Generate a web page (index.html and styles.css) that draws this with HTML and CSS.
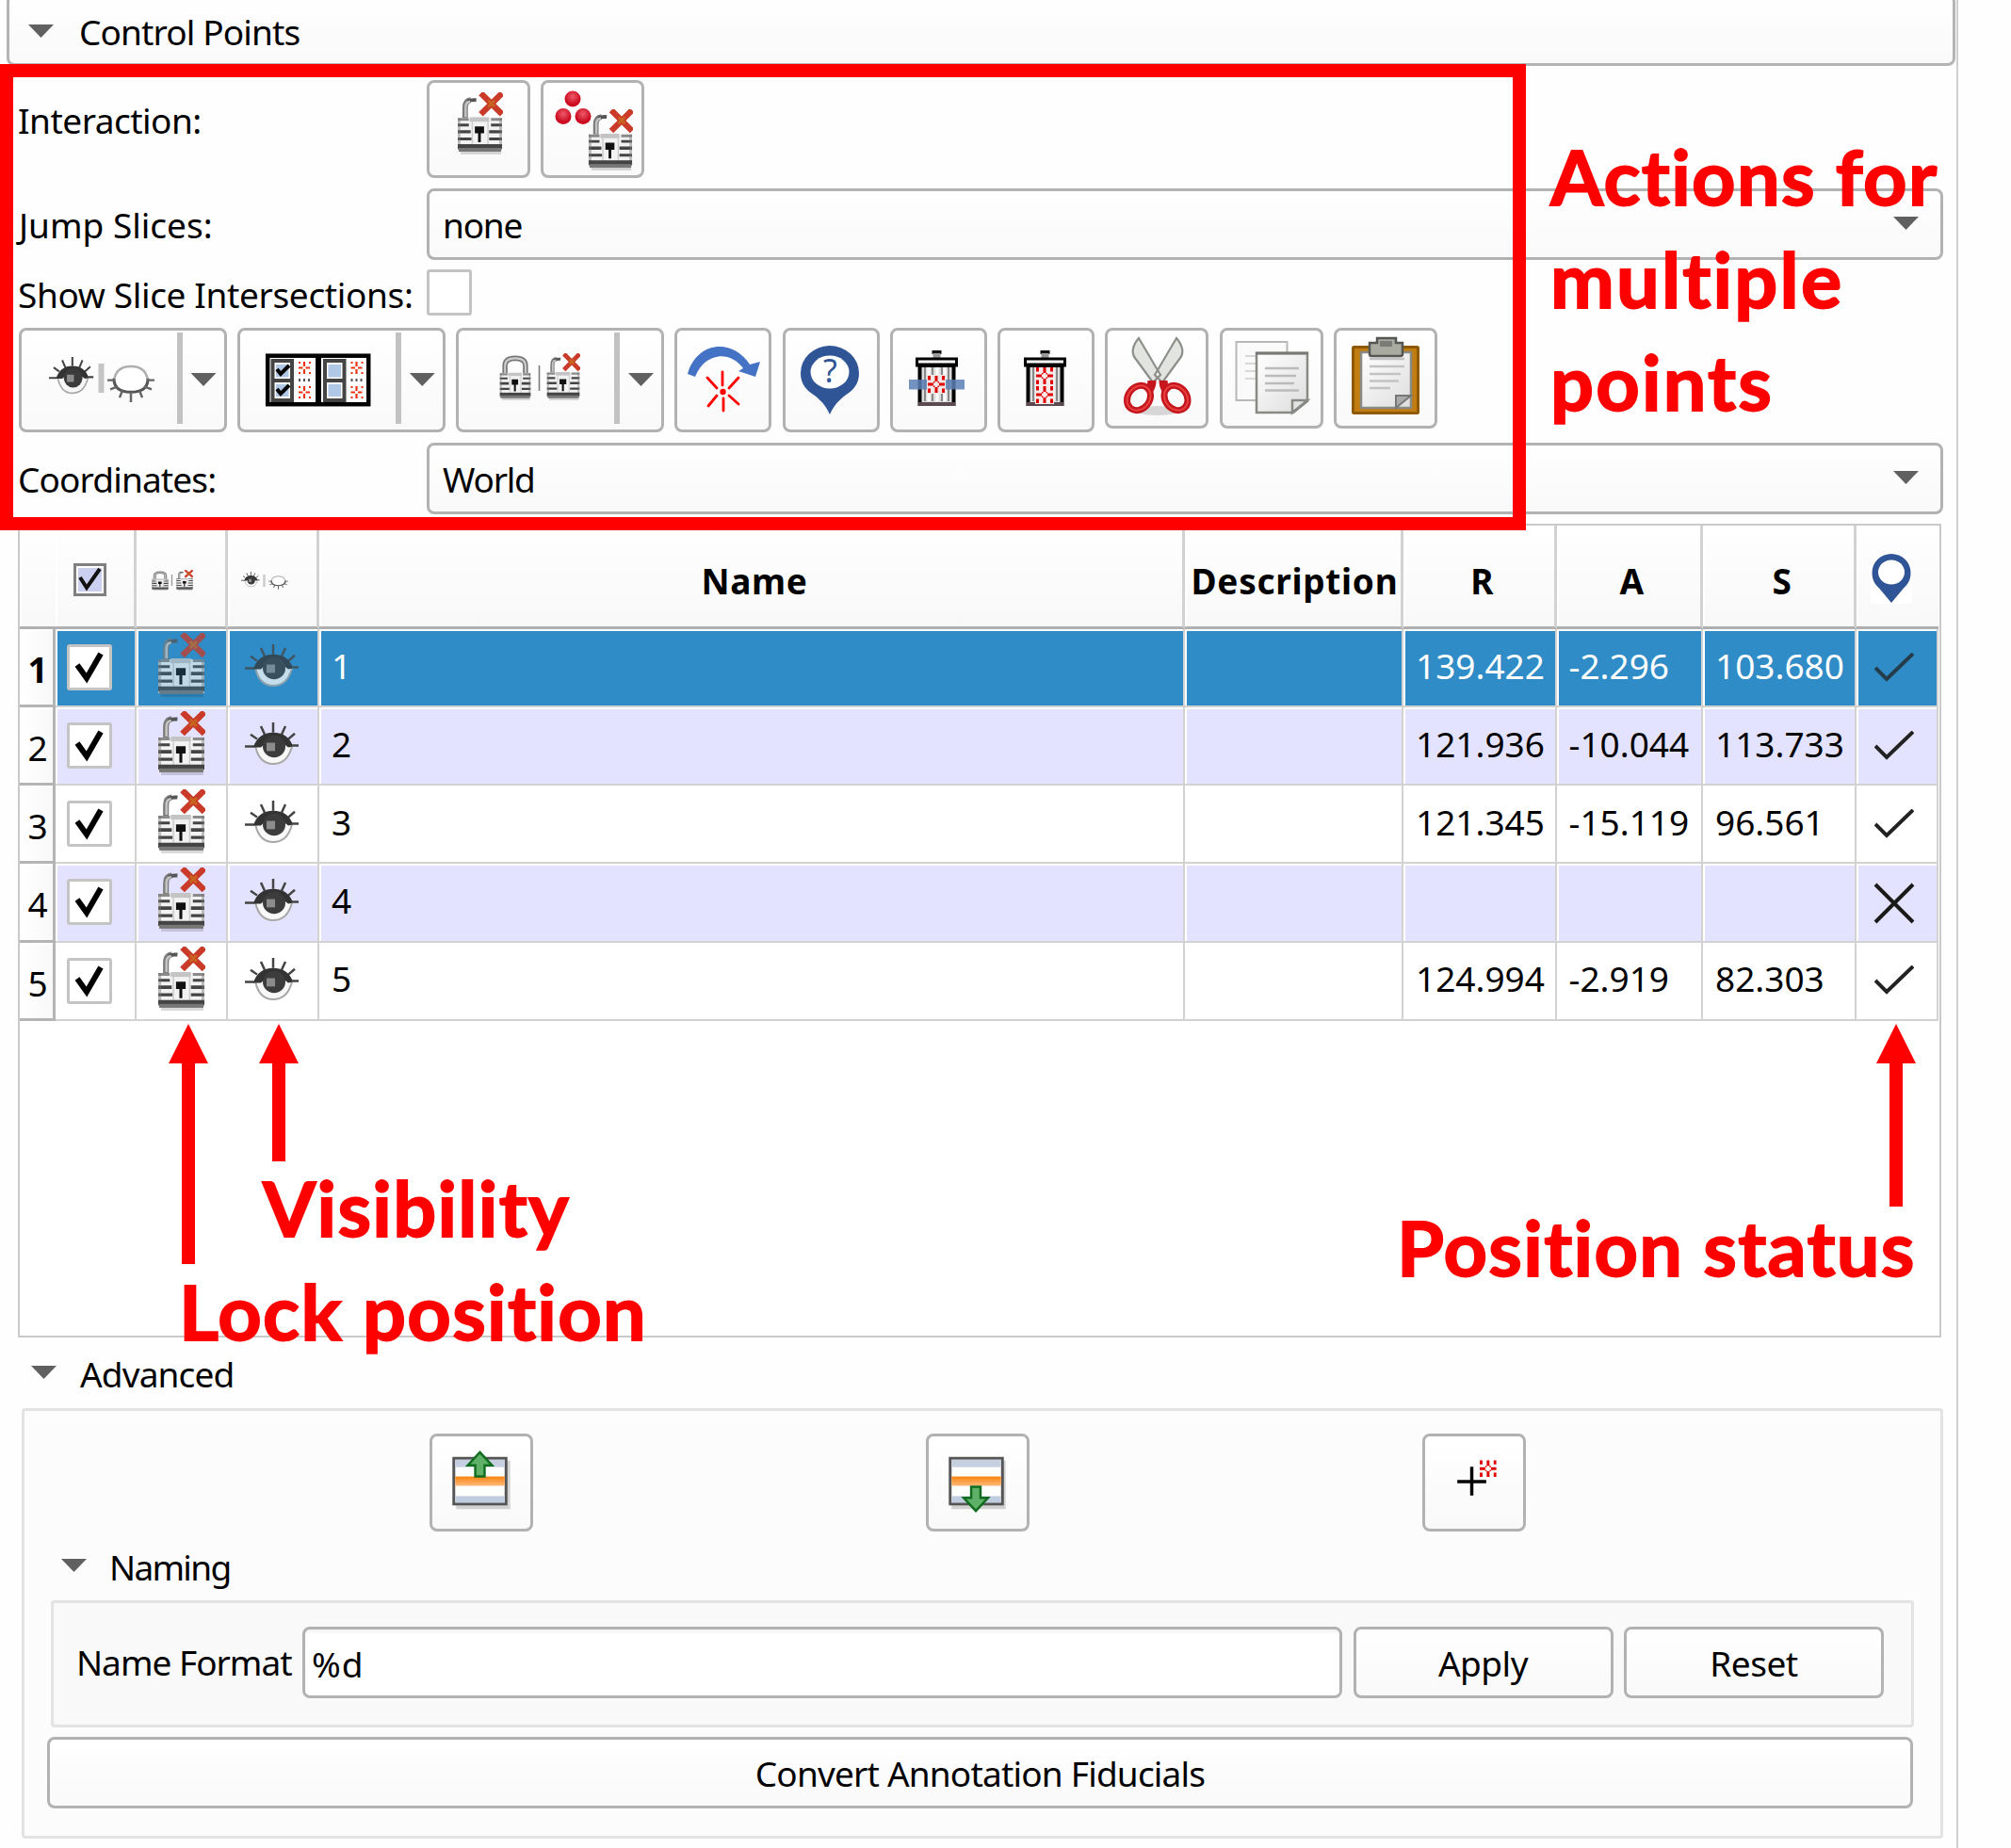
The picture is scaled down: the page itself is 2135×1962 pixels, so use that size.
FILE: index.html
```html
<!DOCTYPE html>
<html lang="en">
<head>
<meta charset="utf-8">
<title>Control Points</title>
<link rel="stylesheet" href="styles.css">
</head>
<body>
<svg class="defs" aria-hidden="true">
  <defs>
    <radialGradient id="gBall" cx=".5" cy=".35"><stop offset="0" stop-color="#ee5b6a"/><stop offset="1" stop-color="#cc0a20"/></radialGradient>
    <linearGradient id="gOr" x1="0" x2="0" y1="0" y2="1"><stop offset="0" stop-color="#f98208"/><stop offset=".4" stop-color="#fa9a3c"/><stop offset="1" stop-color="#fdb878"/></linearGradient>
    <linearGradient id="gPage" x1="0" x2="1" y1="0" y2="1"><stop offset="0" stop-color="#fff"/><stop offset="1" stop-color="#ddd"/></linearGradient>
  </defs>
  <symbol id="lockbody" viewBox="0 0 50 40" preserveAspectRatio="none">
    <rect x="4" y="36" width="44" height="4" fill="#000" opacity=".15"/>
    <rect x="1" y="1" width="48" height="35" fill="#f2f2f2"/>
    <path d="M1 1h12v3H1zM37 1h12v3H37z" fill="#8a8a8a"/>
    <path d="M1 7h12v3H1zM37 7h12v3H37zM1 14h14v3.500H1zM35 14h14v3.500H35zM1 22h15v3H1zM35 22h14v3H35z" fill="#444"/>
    <path d="M1 1h3v34H1zM46 1h3v34h-3z" fill="#777" opacity=".45"/>
    <rect x="14" y="0" width="21" height="5" fill="#c4c4c4"/>
    <rect x="16" y="5" width="1.500" height="24" fill="#ccc"/><rect x="33" y="5" width="1.500" height="24" fill="#ccc"/>
    <path d="M19.500 10h10v7.500h-3.500v9.500h-3v-9.500h-3.500z" fill="#111"/>
    <rect x="1" y="29" width="48" height="5" fill="#444"/><rect x="2" y="33" width="46" height="4" fill="#777"/>
  </symbol>
  <symbol id="unlock" viewBox="0 0 50 68" preserveAspectRatio="none">
    <path d="M9 28V17q0-8 6-8.500" fill="none" stroke="#7c7c7c" stroke-width="6"/>
    <path d="M12 10q3-2 9-1.500" fill="none" stroke="#555" stroke-width="4"/>
    <path d="M9.500 27V16q0-5 5-6" fill="none" stroke="#c4c4c4" stroke-width="2.500"/>
    <use href="#lockbody" x="0" y="27" width="50" height="41"/>
    <path d="M26 1l23 23M49 1L26 24" stroke="#c93a28" stroke-width="6.500"/>
    <path d="M34 9l7 7M41 9l-7 7" stroke="#c8641f" stroke-width="3"/>
  </symbol>
  <symbol id="lock" viewBox="0 0 50 68" preserveAspectRatio="none">
    <path d="M9 30V17q0-11 16-11t16 11v13" fill="none" stroke="#777" stroke-width="8"/>
    <path d="M9 30V17q0-11 16-11t16 11v13" fill="none" stroke="#ccc" stroke-width="3"/>
    <use href="#lockbody" x="0" y="27" width="50" height="41"/>
  </symbol>
  <symbol id="eye" viewBox="0 0 58 48" preserveAspectRatio="none">
    <path d="M0 26h10M6 13l7 5M17 4l4 9M30 0v11M43 4l-4 9M53 12l-8 7M48 25h9" stroke="#444" stroke-width="2.500"/>
    <path d="M11 25Q20 14 29 14t21 12Q45 45 30 45T11 25z" fill="#f8f8f8" stroke="#a8a8a8" stroke-width="2"/>
    <path d="M9 27q5-16 21-16t21 15l-5 1q-5-5-15-5t-14 5z" fill="#333"/>
    <circle cx="31" cy="26" r="12" fill="#3c3c3c"/>
    <rect x="23" y="22" width="9" height="9" fill="#8c8c8c"/>
  </symbol>
  <symbol id="eyeoff" viewBox="0 0 50 42" preserveAspectRatio="none">
    <path d="M7 21Q7 2 25 2t18 19" fill="#fff" stroke="#b0b0b0" stroke-width="2.500"/>
    <path d="M7 15Q7 30 25 30t18-15" fill="#fff" stroke="#555" stroke-width="3"/>
    <path d="M0 17h8M42 17h8M3 27l8-3M13 36l3-8M25 41V30M37 36l-3-8M47 27l-8-3" stroke="#666" stroke-width="2.500"/>
  </symbol>
  <symbol id="star" viewBox="0 0 18 18" preserveAspectRatio="none">
    <path d="M7.500 0h3v6h-3zM7.500 12h3v6h-3zM0 7.500h6v3H0zM12 7.500h6v3h-6zM6 6h1.500v1.500H6zM10.500 6H12v1.500h-1.500zM6 10.500h1.500V12H6zM10.500 10.500H12V12h-1.500zM0 0h3v4.500H0zM15 0h3v4.500h-3zM0 13.500h3V18H0zM15 13.500h3V18h-3z" fill="#e00000"/>
  </symbol>
  <symbol id="tick" viewBox="0 0 42 31">
    <path d="M1 16l12 12L41 1" fill="none" stroke="#222" stroke-width="4"/>
  </symbol>
  <symbol id="trash" viewBox="0 0 45 60">
    <rect x="17.500" y="0" width="10" height="4" fill="#111"/><rect x="18.500" y="3" width="8" height="5" fill="#999"/>
    <rect x="4.500" y="16" width="36" height="41" fill="#ddd" stroke="#000" stroke-width="4"/>
    <path d="M10 18v36M18 18v36M28 18v36M35 18v36" stroke="#888" stroke-width="2"/>
    <path d="M14 18v36M23 18v36M31 18v36" stroke="#fff" stroke-width="3"/>
    <rect x="1.500" y="9" width="42" height="7" fill="#fff" stroke="#000" stroke-width="3"/>
    <path d="M3 15.500h39" stroke="#000" stroke-width="4"/>
    <rect x="3" y="55" width="39" height="4" fill="#5c4a50"/>
  </symbol>
</svg>

<main class="panel">
  <header class="section-head"><i class="caret"></i><span>Control Points</span></header>

  <div class="row row-interaction">
    <label class="lab">Interaction:</label>
    <button class="btn b110"><svg viewBox="453 85 110 103"><use href="#unlock" x="485" y="97" width="49" height="66"/></svg></button>
    <button class="btn b110"><svg viewBox="574 85 110 103"><circle cx="608" cy="104" r="8.500" fill="url(#gBall)"/><circle cx="598" cy="122.500" r="8.500" fill="url(#gBall)"/><circle cx="619" cy="122.500" r="8.500" fill="url(#gBall)"/><use href="#unlock" x="624" y="115" width="48" height="65"/></svg></button>
  </div>
  <div class="row row-jump">
    <label class="lab">Jump Slices:</label>
    <div class="combo"><span>none</span><i class="caret"></i></div>
  </div>
  <div class="row row-show">
    <label class="lab">Show Slice Intersections:</label>
    <i class="check"></i>
  </div>
  <div class="toolbar">
    <button class="btn split"><svg viewBox="20 348 221 111"><use href="#eye" x="52" y="379" width="48" height="41"/><rect x="104.500" y="386" width="6" height="31" fill="#c6c6c6"/><use href="#eyeoff" x="114" y="387" width="50" height="41"/></svg><i class="caret"></i></button>
    <button class="btn split"><svg viewBox="252 348 221 111">
      <rect x="284.200" y="377.700" width="107" height="51.500" fill="#fff" stroke="#000" stroke-width="4.500"/><path d="M338 377v53" stroke="#000" stroke-width="6"/>
      <path d="M289.500 383h20.500v42h-20.500zM289.500 404h20.500M345 383h20.500v42H345zM345 404h20.500" fill="#fff" stroke="#444" stroke-width="4"/>
      <path d="M293 387h13.500v13.500H293zM293 408h13.500v13H293zM348.500 387H362v13.500h-13.500zM348.500 408H362v13h-13.500z" fill="#b0c8e6"/>
      <path d="M294 392l4 5 9-9M294 413l4 5 9-9" fill="none" stroke="#000" stroke-width="4"/>
      <g id="dots"><path d="M323 384v5M323 392v5M317 390.500h4.500M324.500 390.500h4.500M317 385h2M328 385h2M317 396h2M328 396h2M323 410v5M323 418v5M317 416.500h4.500M324.500 416.500h4.500M317 411h2M328 411h2M317 422h2M328 422h2" stroke="#ea3210" stroke-width="2.200"/><path d="M317 403.500h2M322 403.500h2M327 403.500h2" stroke="#555" stroke-width="3"/></g><use href="#dots" x="55.500"/>
    </svg><i class="caret"></i></button>
    <button class="btn split"><svg viewBox="484 348 221 111"><use href="#lock" x="530" y="376" width="34" height="49"/><path d="M572.500 388v27" stroke="#777" stroke-width="1.500"/><use href="#unlock" x="580" y="375" width="36" height="50"/></svg><i class="caret"></i></button>
    <button class="btn b103"><svg viewBox="716 348 103 111">
      <path d="M730 397C740 362 778 359 796 387l11-3-5 16-18-6 5-3C775 372 748 374 738 400z" fill="#4472c4"/>
      <g stroke="#f00" stroke-width="2.800" stroke-linecap="round"><path d="M767 395v14M768 423v13M751 401l10 11M784 401l-10 11M752 431l9-11M784 429l-10-9"/></g><circle cx="767.500" cy="416" r="3.200" fill="#f00"/>
    </svg></button>
    <button class="btn b103"><svg viewBox="831 348 103 111"><path d="M880.500 367a31.500 29 0 0 1 31.500 29c0 12-6 18-15 24-6 5-11 9-16 20-5-11-10-15-16-20-9-6-15-12-15-24a31.500 29 0 0 1 30.500-29z" fill="#2f5597"/><ellipse cx="881" cy="395" rx="20.500" ry="17.500" fill="#fff"/><text x="881" y="406" text-anchor="middle" class="q">?</text></svg></button>
    <button class="btn b103"><svg viewBox="945 348 103 111"><use href="#trash" x="972" y="372" width="45" height="60"/><rect x="965" y="403" width="59" height="10.500" fill="#5b7fb5" opacity=".85"/><rect x="984" y="398" width="20" height="20" fill="#f2e6e6"/><use href="#star" x="985" y="399" width="18" height="18"/></svg></button>
    <button class="btn b103"><svg viewBox="1059 348 103 111"><use href="#trash" x="1087" y="372" width="45" height="60"/><rect x="1099" y="390" width="20" height="39" fill="#f6ecec"/><use href="#star" x="1100" y="390" width="18" height="18"/><use href="#star" x="1100" y="410" width="18" height="18"/></svg></button>
    <button class="btn b110 short"><svg viewBox="1173 348 110 107">
      <ellipse cx="1229" cy="436" rx="24" ry="5" fill="#000" opacity=".14"/>
      <path d="M1209 359c-7 8-8 16-4 21l19 26 8-8zM1249 359c7 8 8 16 4 21l-19 26-8-8z" fill="#e2e4df" stroke="#8c8f89" stroke-width="2.200"/>
      <g fill="none" stroke="#c4161c" stroke-width="7"><ellipse cx="1209" cy="422.500" rx="11.500" ry="14" transform="rotate(38 1209 422.500)"/><ellipse cx="1248.500" cy="422.500" rx="11.500" ry="14" transform="rotate(-38 1248.500 422.500)"/><path d="M1220 414q3-4 3-10M1238 414q-3-4-3-10" stroke-width="9"/></g>
      <g fill="none" stroke="#ea4040" stroke-width="2"><ellipse cx="1209" cy="422.500" rx="11.500" ry="14" transform="rotate(38 1209 422.500)"/><ellipse cx="1248.500" cy="422.500" rx="11.500" ry="14" transform="rotate(-38 1248.500 422.500)"/></g>
    </svg></button>
    <button class="btn b110 short"><svg viewBox="1295 348 110 107">
      <path d="M1312.500 363h54v62h-54z" fill="#fafafa" stroke="#b8b8b8" stroke-width="2"/><path d="M1322 378h20M1322 386h20M1322 394h20M1322 402h20" stroke="#d8d8d8" stroke-width="2"/>
      <path d="M1334 375h54v51l-15 12h-39z" fill="url(#gPage)" stroke="#888a85" stroke-width="2.500"/><path d="M1333 375h56" stroke="#777a74" stroke-width="3"/><path d="M1372 438v-13h16z" fill="#e4e4e4" stroke="#888a85" stroke-width="2.500"/>
      <path d="M1343 391h36M1343 399h33M1343 407h31M1343 414.500h36" stroke="#bbb" stroke-width="2.600"/>
    </svg></button>
    <button class="btn b110 short"><svg viewBox="1416 348 110 107">
      <rect x="1436.500" y="368.500" width="69" height="70" rx="1" fill="#c17d11" stroke="#8f5902" stroke-width="3"/>
      <path d="M1445 374h53v59h-53z" fill="url(#gPage)" stroke="#888a85" stroke-width="2.500"/><path d="M1482 433v-13h16z" fill="#aaa" stroke="#777" stroke-width="2"/>
      <path d="M1454 381h37M1454 389h37M1454 397h33M1454 404.500h31M1454 412h22" stroke="#c2c2c2" stroke-width="2.600"/>
      <path d="M1462 359h20v5h7v12q0 2-2 2h-31q-2 0-2-2v-12h8z" fill="#a9aba0" stroke="#555753" stroke-width="2.500"/><rect x="1465" y="362" width="13" height="6" fill="#7a7c75"/>
    </svg></button>
  </div>
  <div class="row row-coord">
    <label class="lab">Coordinates:</label>
    <div class="combo"><span>World</span><i class="caret"></i></div>
  </div>

  <section class="table">
    <div class="tr th">
      <div class="c0"></div>
      <div><svg class="h-check" viewBox="0 0 35 35"><rect x="1.500" y="1.500" width="32" height="32" fill="#fff" stroke="#808080" stroke-width="3"/><rect x="5" y="5" width="25" height="25" fill="#ccd0f0"/><path d="M7 15l7 11L28 6" fill="none" stroke="#111" stroke-width="4"/></svg></div>
      <div><svg class="h-lock" viewBox="0 0 46 24"><use href="#lock" x="0" y="1" width="18" height="21"/><path d="M21.500 5v12" stroke="#999" stroke-width="1.300"/><use href="#unlock" x="26" y="0" width="18" height="22"/></svg></div>
      <div><svg class="h-eye" viewBox="0 0 50 20"><use href="#eye" x="0" y="0" width="20" height="17"/><path d="M24.500 3v13" stroke="#ccc" stroke-width="2.500"/><use href="#eyeoff" x="29" y="4" width="21" height="15"/></svg></div>
      <div>Name</div><div class="desc">Description</div><div>R</div><div>A</div><div>S</div>
      <div><svg class="h-pin" viewBox="0 0 44 54"><rect width="44" height="54" fill="#fff"/><path d="M22 1a20.500 20 0 0 1 20.500 20c0 9-4 13-8 17L22 53 9.500 38c-4-4-8-8-8-17A20.500 20 0 0 1 22 1z" fill="#2f5597"/><ellipse cx="22" cy="20.500" rx="14" ry="13" fill="#fff"/></svg></div>
    </div>
    <div class="tr sel"><div class="c0">1</div><div><i class="check on"><svg viewBox="0 0 30 32"><path d="M2 14l10 14L27 2"/></svg></i></div><div><svg class="i-lock"><use href="#unlock"/></svg></div><div><svg class="i-eye"><use href="#eye"/></svg></div><div class="t">1</div><div></div><div class="t">139.422</div><div class="t">-2.296</div><div class="t">103.680</div><div><svg class="i-tick"><use href="#tick"/></svg></div></div>
    <div class="tr alt"><div class="c0">2</div><div><i class="check on"><svg viewBox="0 0 30 32"><path d="M2 14l10 14L27 2"/></svg></i></div><div><svg class="i-lock"><use href="#unlock"/></svg></div><div><svg class="i-eye"><use href="#eye"/></svg></div><div class="t">2</div><div></div><div class="t">121.936</div><div class="t">-10.044</div><div class="t">113.733</div><div><svg class="i-tick"><use href="#tick"/></svg></div></div>
    <div class="tr"><div class="c0">3</div><div><i class="check on"><svg viewBox="0 0 30 32"><path d="M2 14l10 14L27 2"/></svg></i></div><div><svg class="i-lock"><use href="#unlock"/></svg></div><div><svg class="i-eye"><use href="#eye"/></svg></div><div class="t">3</div><div></div><div class="t">121.345</div><div class="t">-15.119</div><div class="t">96.561</div><div><svg class="i-tick"><use href="#tick"/></svg></div></div>
    <div class="tr alt"><div class="c0">4</div><div><i class="check on"><svg viewBox="0 0 30 32"><path d="M2 14l10 14L27 2"/></svg></i></div><div><svg class="i-lock"><use href="#unlock"/></svg></div><div><svg class="i-eye"><use href="#eye"/></svg></div><div class="t">4</div><div></div><div></div><div></div><div></div><div><svg class="i-cross" viewBox="0 0 42 42"><path d="M1 1l40 40M41 1L1 41" stroke="#1a1a1a" stroke-width="4"/></svg></div></div>
    <div class="tr"><div class="c0">5</div><div><i class="check on"><svg viewBox="0 0 30 32"><path d="M2 14l10 14L27 2"/></svg></i></div><div><svg class="i-lock"><use href="#unlock"/></svg></div><div><svg class="i-eye"><use href="#eye"/></svg></div><div class="t">5</div><div></div><div class="t">124.994</div><div class="t">-2.919</div><div class="t">82.303</div><div><svg class="i-tick"><use href="#tick"/></svg></div></div>
  </section>

  <div class="sub-head"><i class="caret"></i><span>Advanced</span></div>
  <section class="frame">
    <div class="adv-buttons">
      <button class="btn b110"><svg viewBox="456 1522 110 104"><rect x="484" y="1550" width="58" height="52" fill="#000" opacity=".16"/><rect x="481.500" y="1547.500" width="56" height="49" fill="#fff" stroke="#555" stroke-width="3"/><rect x="483" y="1549" width="53" height="8" fill="#c6d0e0"/><rect x="483" y="1588" width="53" height="7" fill="#c0ccdf"/><rect x="483" y="1567" width="53" height="10" fill="url(#gOr)"/><path d="M509.500 1541l13 14h-8v12h-10v-12h-8z" fill="#5fb069" stroke="#0f6d1d" stroke-width="2.500"/></svg></button>
      <button class="btn b110"><svg viewBox="983 1522 110 104"><rect x="1010" y="1550" width="58" height="52" fill="#000" opacity=".16"/><rect x="1008.500" y="1547.500" width="56" height="49" fill="#fff" stroke="#555" stroke-width="3"/><rect x="1010" y="1549" width="53" height="8" fill="#c6d0e0"/><rect x="1010" y="1588" width="53" height="7" fill="#c0ccdf"/><rect x="1010" y="1567" width="53" height="10" fill="url(#gOr)"/><path d="M1036 1604l13-14h-8v-12h-10v12h-8z" fill="#5fb069" stroke="#0f6d1d" stroke-width="2.500"/></svg></button>
      <button class="btn b110"><svg viewBox="1510 1522 110 104"><path d="M1562.500 1556.500v31M1547 1572.500h31" stroke="#000" stroke-width="3.500"/><use href="#star" x="1571" y="1549.500" width="18" height="18"/></svg></button>
    </div>
    <div class="sub-head naming"><i class="caret"></i><span>Naming</span></div>
    <div class="frame inner">
      <label>Name Format</label>
      <div class="input">%d</div>
      <button class="btn txt">Apply</button>
      <button class="btn txt">Reset</button>
    </div>
    <button class="btn convert">Convert Annotation Fiducials</button>
  </section>
</main>

<div class="callout-box"></div>
<div class="note n-actions">Actions for<br><span class="loose">multiple<br>points</span></div>
<div class="note n-vis">Visibility</div>
<div class="note n-lock">Lock position</div>
<div class="note n-pos">Position status</div>
<svg class="arrows" viewBox="0 0 2135 1962"><path d="M200 1087l21 42h-14v213h-14v-213h-14zM296 1087l21 42h-14v104h-14v-104h-14zM2013 1087l21 42h-14v152h-14v-152h-14z" fill="#f00"/></svg>
</body>
</html>
```

FILE: styles.css
```css
* { box-sizing: border-box; }
body {
  margin: 0;
  position: relative;
  width: 2135px;
  height: 1962px;
  overflow: hidden;
  background: #fefefe;
  color: #000;
  font: 37px/44px "Noto Sans", sans-serif;
  letter-spacing: -.85px;
}
svg { display: block; overflow: visible; }
.defs { position: absolute; width: 0; height: 0; }
button { font: inherit; color: inherit; letter-spacing: inherit; padding: 0; margin: 0; }

.panel {
  width: 2079px;
  height: 1962px;
  border-right: 2px solid #cfcfcf;
  display: flex;
  flex-direction: column;
}
.caret {
  display: block;
  width: 27px;
  height: 14px;
  background: #606060;
  clip-path: polygon(0 0, 100% 0, 50% 100%);
}
.section-head {
  margin: -6px 1px 0 7px;
  height: 76px;
  border: 3px solid #b4b4b4;
  border-radius: 8px;
  background: linear-gradient(#fff, #f9f9f9);
  display: flex;
  align-items: flex-start;
  gap: 27px;
  padding: 15px 0 0 20px;
}
.section-head .caret { margin-top: 14px; }

.btn {
  border: 3px solid #b2b2b2;
  border-radius: 8px;
  background: linear-gradient(#fff, #f9f9f9);
  flex: none;
}
.btn > svg { margin: -3px; }
.b110 { width: 110px; height: 104px; }
.b110 > svg { width: 110px; height: 103px; }
.b103 { width: 103px; height: 111px; }
.b103 > svg { width: 103px; height: 111px; }
.short, .short > svg { height: 107px; }

.row { display: flex; padding-left: 19px; }
.lab { width: 434px; flex: none; white-space: nowrap; }
.row-interaction { margin-top: 15px; height: 103px; gap: 11px; }
.row-interaction .lab { width: 423px; padding-top: 21px; letter-spacing: -.5px; }
.row-jump { margin-top: 12px; height: 76px; }
.row-jump .lab { padding: 17px 0 0 1px; letter-spacing: 0; }
.row-coord .lab { padding-top: 17px; }
.row-show { margin-top: 10px; height: 49px; }
.row-show .lab { padding-top: 5px; letter-spacing: -.35px; }
.combo {
  width: 1610px;
  height: 76px;
  border: 3px solid #b2b2b2;
  border-radius: 8px;
  background: linear-gradient(#fff, #f9f9f9);
  display: flex;
  justify-content: space-between;
  padding: 14px 23px 0 14px;
  letter-spacing: -1.200px;
}
.combo .caret { margin-top: 13px; }
.check {
  display: block;
  width: 48px;
  height: 49px;
  border: 3px solid #c4c4c4;
  border-radius: 3px;
  background: #fff;
}
.check svg { width: 30px; height: 32px; margin: 5px 0 0 6px; }
.check path { fill: none; stroke: #000; stroke-width: 6; }

.toolbar { display: flex; gap: 11.250px; margin: 13px 0 0 19.500px; height: 111px; }
.split { position: relative; width: 221px; height: 111px; display: flex; }
.split > svg { width: 221px; height: 111px; flex: none; }
.split::after {
  content: "";
  position: absolute;
  left: 165px;
  top: 2px;
  width: 6px;
  height: 97px;
  background: #c2c2c2;
}
.split .caret { position: absolute; left: 180px; top: 45px; }
.q { font: 34px "Noto Sans", sans-serif; fill: #2f5597; }

.row-coord { margin-top: 11px; height: 76px; }

.table {
  margin: 10px 0 0 19px;
  width: 2042px;
  height: 864px;
  border: 2px solid #cacaca;
  background: #fff;
}
.tr {
  display: grid;
  grid-template-columns: 38px 86px 97px 97px 919px 232px 162.500px 155.500px 163px 87px;
  height: 83.150px;
}
.tr > div {
  border-right: 2px solid #d2d2d2;
  border-bottom: 2px solid #d2d2d2;
  box-shadow: inset 2px 2px #fff;
  display: flex;
  align-items: center;
  justify-content: center;
}
.tr .c0 {
  border-right: 3px solid #b4b4b4;
  border-bottom: 3px solid #b4b4b4;
  background: linear-gradient(90deg, #fff, #f8f8f8);
  padding: 6px 0 0 3px;
  letter-spacing: 0;
}
.tr > .t { justify-content: flex-start; padding-left: 13px; padding-bottom: 4px; letter-spacing: 0; }
.alt > div { background: #e4e3ff; }
.sel > div { background: #308cc6; color: #fff; }
.sel .c0 { color: #000; font-weight: 700; }
.sel svg { opacity: .75; }
.sel .check svg { opacity: 1; }
.th { height: 110px; font-weight: 700; letter-spacing: .7px; }
.th > div, .th > .c0 {
  background: linear-gradient(#fff, #f8f8f8);
  border-right: 3px solid #d2d2d2;
  border-bottom: 3px solid #b0b0b0;
  padding: 10px 0 0 8px;
}
.th > .desc { padding-left: 4px; }
.th > .c0 { border-right: 0; }
.th > div:last-child { border-right: 0; }
.h-check { width: 35px; height: 35px; margin: -3px 0 0 -18px; }
.h-lock { width: 46px; height: 24px; margin: 1px 0 0 -24px; }
.h-eye { width: 50px; height: 20px; margin: 1px 0 0 -24px; }
.h-pin { width: 44px; height: 54px; margin: -6px 21px 0 0; }
.tr .check { margin-left: -13px; }
.i-lock { width: 51px; height: 68px; margin-top: -5px; }
.i-eye { width: 58px; height: 47px; margin: -2px 2px 0 0; }
.i-tick { width: 42px; height: 31px; margin: -1px 5px 0 0; }
.i-cross { width: 42px; height: 42px; margin: 2px 5px 0 0; }

.sub-head { display: flex; gap: 25px; margin: 17px 0 0 33px; height: 58px; }
.sub-head .caret { margin-top: 13px; }
.frame {
  margin-left: 23px;
  width: 2040px;
  height: 457px;
  border: 3px solid #e3e3e3;
  border-radius: 4px;
  background: #fcfcfc;
}
.adv-buttons { display: flex; gap: 417px; padding: 24px 0 0 430px; }
.naming { margin: 29px 0 0 39px; height: 44px; }
.naming .caret { margin-top: 0; }
.naming span { margin: -13px 0 0 -1px; letter-spacing: -1.700px; }
.inner {
  margin: 0 0 0 28px;
  width: 1978px;
  height: 135px;
  background: #f9f9f9;
  display: flex;
  padding: 25px 0 0 24px;
}
.inner label { width: 240px; padding-top: 16px; white-space: nowrap; letter-spacing: -1px; }
.input {
  width: 1104px;
  height: 76px;
  border: 3px solid #b2b2b2;
  border-radius: 8px;
  background: linear-gradient(#f2f2f2, #fff 5px);
  padding: 15px 0 0 7px;
  letter-spacing: 1px;
}
.txt { width: 276px; height: 76px; margin-left: 11.500px; padding-top: 2px; letter-spacing: -.5px; }
.convert { width: 1981px; height: 76px; margin: 10px 0 0 24px; padding-top: 2px; display: block; letter-spacing: -.8px; }

.callout-box {
  position: absolute;
  left: 0;
  top: 68px;
  width: 1620px;
  height: 495px;
  border: 14px solid #f00;
}
.note {
  position: absolute;
  color: #f00;
  font: 700 81px/109px Lato, sans-serif;
  font-variant-ligatures: none;
  letter-spacing: 1.300px;
  -webkit-text-stroke: 1.800px #f00;
  white-space: nowrap;
}
.loose { letter-spacing: 2.200px; }
.n-actions { left: 1646px; top: 132px; }
.n-vis { left: 279px; top: 1227px; }
.n-lock { left: 190px; top: 1337px; }
.n-pos { left: 1483px; top: 1269px; }
.arrows { position: absolute; left: 0; top: 0; width: 2135px; height: 1962px; pointer-events: none; }
```
